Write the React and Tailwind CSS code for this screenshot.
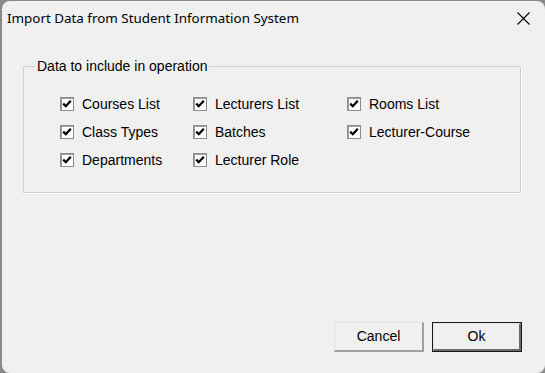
import React from "react";

function Check({ label }) {
  return (
    <div className="flex items-center h-[28px]">
      <div className="w-[14px] h-[14px] border border-[#8d8d8d] bg-white flex items-center justify-center shadow-[inset_1px_1px_0_#a0a0a0]">
        <svg width="10" height="10" viewBox="0 0 10 10">
          <path d="M1.2 4.6 L3.8 7.2 L8.8 1.8" fill="none" stroke="#000" strokeWidth="2.3" />
        </svg>
      </div>
      <span className="ml-[8px] text-[14px] text-black leading-none">{label}</span>
    </div>
  );
}

export default function App() {
  return (
    <div
      className="w-[545px] h-[373px] bg-[#8a8a8a] pl-[2px] pt-[1px] flex overflow-hidden"
      style={{ fontFamily: '"Liberation Sans", Arial, sans-serif' }}
    >
      <div className="flex-1 rounded-[8px] bg-[#f0f0f0] flex flex-col">
        <div className="h-[35px] flex items-center justify-between pl-[5px] pr-[15px]">
          <span
            className="text-[13.4px] text-black"
            style={{ fontFamily: '"Noto Sans", "Open Sans", sans-serif' }}
          >
            Import Data from Student Information System
          </span>
          <svg width="13" height="13" viewBox="0 0 13 13">
            <path d="M0.5 0.5 L12.5 12.5 M12.5 0.5 L0.5 12.5" stroke="#000" strokeWidth="1.1" fill="none" />
          </svg>
        </div>
        <fieldset className="ml-[21px] mr-[24px] mt-[22px] border border-[#d0d0d0] shadow-[1px_1px_0_#fff] pt-[16px] pb-[18px]">
          <legend className="ml-[11px] px-[2px] text-[14px] text-black leading-[16px]">
            Data to include in operation
          </legend>
          <div className="pl-[36px] grid grid-cols-[133px_154px_auto]">
            <Check label="Courses List" />
            <Check label="Lecturers List" />
            <Check label="Rooms List" />
            <Check label="Class Types" />
            <Check label="Batches" />
            <Check label="Lecturer-Course" />
            <Check label="Departments" />
            <Check label="Lecturer Role" />
          </div>
        </fieldset>
        <div className="flex-1" />
        <div className="flex justify-end gap-[8px] pr-[23px] pb-[21px]">
          <button className="w-[90px] h-[30px] bg-[#f0f0f0] border-t border-l border-t-[#e3e3e3] border-l-[#e3e3e3] border-b-2 border-r-2 border-b-[#a0a0a0] border-r-[#a0a0a0] text-[14px] text-black">
            Cancel
          </button>
          <button className="w-[90px] h-[30px] border border-[#1a1a1a] flex">
            <div className="flex-1 bg-[#f0f0f0] border-t border-l border-t-[#e3e3e3] border-l-[#e3e3e3] border-b-2 border-r-2 border-b-[#6a6a6a] border-r-[#6a6a6a] flex items-center justify-center text-[14px] text-black">
              Ok
            </div>
          </button>
        </div>
      </div>
    </div>
  );
}
